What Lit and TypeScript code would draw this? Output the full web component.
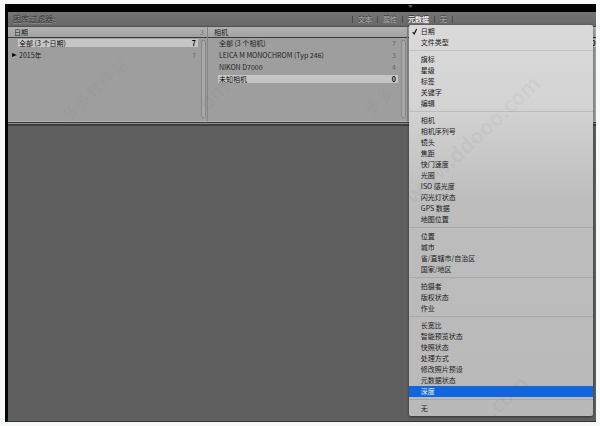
import { LitElement, html, css } from "lit";
import { customElement, property, state } from "lit/decorators.js";
import { classMap } from "lit/directives/class-map.js";

interface Row {
  label: string;
  count: string;
  selected?: boolean;
  parent?: boolean;
}

interface Column {
  title: string;
  total: string;
  rows: Row[];
}

const TABS = ["文本", "属性", "元数据", "无"];

const COLUMNS: Column[] = [
  {
    title: "日期",
    total: "3",
    rows: [
      { label: "全部 (3 个日期)", count: "7", selected: true },
      { label: "2015年", count: "7", parent: true },
    ],
  },
  {
    title: "相机",
    total: "",
    rows: [
      { label: "全部 (3 个相机)", count: "7" },
      { label: "LEICA M MONOCHROM (Typ 246)", count: "3" },
      { label: "NIKON D7000", count: "4" },
      { label: "未知相机", count: "0", selected: true },
    ],
  },
  { title: "", total: "", rows: [{ label: "", count: "0", selected: true }] },
];

const MENU: string[][] = [
  ["日期", "文件类型"],
  ["旗标", "星级", "标签", "关键字", "编辑"],
  ["相机", "相机序列号", "镜头", "焦距", "快门速度", "光圈", "ISO 感光度", "闪光灯状态", "GPS 数据", "地图位置"],
  ["位置", "城市", "省/直辖市/自治区", "国家/地区"],
  ["拍摄者", "版权状态", "作业"],
  ["长宽比", "智能预览状态", "快照状态", "处理方式", "修改照片预设", "元数据状态", "深度"],
  ["无"],
];

@customElement("filter-column")
class FilterColumn extends LitElement {
  @property({ attribute: false }) column!: Column;

  static styles = css`
    :host {
      display: flex;
      flex-direction: column;
      min-width: 0;
      box-sizing: border-box;
      border-right: 1px solid #858585;
    }
    button {
      font: inherit;
      color: inherit;
      border: 0;
      padding: 0;
      background: none;
      text-align: left;
    }
    .head {
      display: flex;
      justify-content: space-between;
      height: 10px;
      padding: 0 3px 0 6px;
      line-height: 10px;
      background: linear-gradient(#b2b2b2, #a2a2a2);
      border-bottom: 1px solid #3c3c3c;
      color: #1c1c1c;
    }
    .total {
      color: #777;
    }
    .body {
      display: flex;
      flex: 1;
      gap: 3px;
      padding: 1px 1px 3px 3px;
    }
    .rows {
      flex: 1;
      display: flex;
      flex-direction: column;
      gap: 4px;
      min-width: 0;
    }
    .row {
      display: flex;
      align-items: center;
      height: 8px;
      line-height: 8px;
      color: #222;
      white-space: nowrap;
    }
    .arrow {
      width: 6px;
      height: 6px;
      flex: none;
      padding-left: 1px;
    }
    .cell {
      flex: 1;
      display: flex;
      justify-content: space-between;
      height: 8px;
      padding: 0 2px 0 1px;
    }
    .selected .cell {
      background: #c6c6c6;
      color: #0a0a0a;
    }
    .count {
      color: #6a6a6a;
    }
    .selected .count {
      color: #0a0a0a;
      font-weight: 700;
    }
    .track {
      width: 3px;
      margin-top: 1px;
      border: 1px solid #888;
      border-radius: 2px;
      background: #a8a8a8;
    }
  `;

  render() {
    const { title, total, rows } = this.column;
    return html`
      <div class="head"><span>${title}</span><span class="total">${total}</span></div>
      <div class="body">
        <div class="rows">
          ${rows.map(
            (r) => html`<button class=${classMap({ row: true, selected: !!r.selected })}>
              <svg class="arrow" viewBox="0 0 6 6">
                ${r.parent ? html`<svg viewBox="0 0 6 6"><path d="M0 1 L5 3 L0 5 Z" fill="#111" /></svg>` : ""}
              </svg>
              <span class="cell"><span>${r.label}</span><span class="count">${r.count}</span></span>
            </button>`
          )}
        </div>
        <div class="track"></div>
      </div>
    `;
  }
}

@customElement("metadata-menu")
class MetadataMenu extends LitElement {
  @state() private checked = "日期";
  @state() private active = "深度";

  static styles = css`
    :host {
      display: block;
      padding: 1px 0 2px;
      border-radius: 2px;
      background: linear-gradient(#dadada, #d4d4d4 20%, #bdbdbd 45%, #b9b9b9);
      box-shadow: 0 1px 3px rgba(0, 0, 0, 0.5);
    }
    .group + .group {
      margin-top: 2px;
      padding-top: 3px;
      border-top: 1px solid rgba(0, 0, 0, 0.1);
    }
    .item {
      display: grid;
      grid-template-columns: 9px 1fr;
      align-items: center;
      width: 100%;
      height: 11px;
      padding: 0 3px;
      border: 0;
      background: none;
      font: inherit;
      line-height: 11px;
      color: #1a1a1a;
      text-align: left;
      white-space: nowrap;
    }
    .active {
      background: #1266dd;
      color: #e8f0ff;
    }
    .check {
      display: block;
      width: 6px;
      height: 7px;
    }
  `;

  render() {
    return MENU.map(
      (group, g) => html`<div class="group" role="group">
        ${group.map(
          (name) => html`<button
            class=${classMap({ item: true, active: name === this.active })}
            role="menuitem"
            @mouseenter=${() => (this.active = name)}
            @click=${() => (this.checked = name)}
          >
            <span>
              ${g === 0 && name === this.checked
                ? html`<svg class="check" viewBox="0 0 6 7">
                    <path d="M0.8 4 L2.2 6 L4.6 1" fill="none" stroke="#111" stroke-width="1.2" />
                  </svg>`
                : ""}
            </span>
            <span>${name}</span>
          </button>`
        )}
      </div>`
    );
  }
}

@customElement("app-root")
class AppRoot extends LitElement {
  @state() private tab = "元数据";

  static styles = css`
    :host {
      display: block;
      box-sizing: border-box;
      min-height: 100vh;
      padding: 4px 4px 4px 5px;
      background: #f7f8f8;
      font: 400 7px/10px "Noto Sans CJK SC", sans-serif;
      position: relative;
      overflow: hidden;
    }
    .window {
      box-sizing: border-box;
      min-height: calc(100vh - 8px);
      border-left: 3px solid #050505;
      background: #5f5f5f;
      position: relative;
      overflow: hidden;
      display: flex;
      flex-direction: column;
      border-bottom: 1px solid #333;
    }
    .top {
      height: 8px;
      background: #000;
      display: flex;
    }
    .top::before {
      content: "";
      flex: 0 0 68%;
    }
    .notch {
      width: 5px;
      height: 3px;
      margin-top: 1px;
    }
    .bar {
      display: flex;
      align-items: center;
      height: 15px;
      background: linear-gradient(#747474, #686868);
      box-sizing: border-box;
      border-bottom: 1px solid #505050;
    }
    .title {
      flex: 0 0 58%;
      box-sizing: border-box;
      padding-left: 5px;
      font-size: 8px;
      color: #333;
      text-shadow: 0 1px 0 #999;
    }
    .tabs {
      display: flex;
      margin-left: 3px;
      border-left: 1px solid #4a4a4a;
    }
    .tab {
      border: 0;
      border-right: 1px solid #4a4a4a;
      background: none;
      padding: 0 5px;
      font: inherit;
      line-height: 7px;
      color: #b0b0b0;
      text-shadow: 0 -1px 0 #3a3a3a;
      white-space: nowrap;
    }
    .tab.on {
      color: #f0f0f0;
      font-weight: 700;
    }
    .columns {
      display: grid;
      grid-template-columns: repeat(3, 34%);
      height: 94px;
      background: #9e9e9e;
      border-bottom: 1px solid #b4b4b4;
    }
    .rule {
      height: 1px;
      border-top: 1px solid #3b3b3b;
      border-bottom: 2px solid #3f3f3f;
      background: #8a8a8a;
    }
    .menu {
      position: absolute;
      top: 21px;
      left: 68%;
      right: 3px;
      margin-left: 1px;
    }
    .mark {
      position: absolute;
      transform: rotate(-43deg);
      transform-origin: 0 100%;
      font: 400 17px/20px "Noto Sans CJK SC", sans-serif;
      color: rgba(90, 100, 140, 0.08);
      white-space: nowrap;
      pointer-events: none;
    }
    .latin {
      font-size: 21px;
    }
    .m1 {
      left: 70px;
      top: 106px;
    }
    .m2 {
      left: 414px;
      top: 186px;
      font-weight: 700;
    }
    .m3 {
      left: 494px;
      top: 400px;
      font-weight: 700;
    }
    .m4 {
      left: 208px;
      top: 92px;
    }
    .m5 {
      left: 372px;
      top: 100px;
    }
  `;

  render() {
    return html`
      <main class="window">
        <div class="top">
          <svg class="notch" viewBox="0 0 5 3"><path d="M0 0 H5 L2.5 3 Z" fill="#555" /></svg>
        </div>
        <header class="bar">
          <div class="title">图库过滤器:</div>
          <nav class="tabs">
            ${TABS.map(
              (t) => html`<button
                class=${classMap({ tab: true, on: t === this.tab })}
                @click=${() => (this.tab = t)}
              >
                ${t}
              </button>`
            )}
          </nav>
        </header>
        <section class="columns">
          ${COLUMNS.map((c) => html`<filter-column .column=${c}></filter-column>`)}
        </section>
        <div class="rule"></div>
        <metadata-menu class="menu" role="menu"></metadata-menu>
      </main>
      <span class="mark m1">多多软件站</span>
      <span class="mark latin m2">www.ddooo.com</span>
      <span class="mark latin m3">.com</span>
      <span class="mark latin m4">om</span>
      <span class="mark m5">多多</span>
    `;
  }
}
